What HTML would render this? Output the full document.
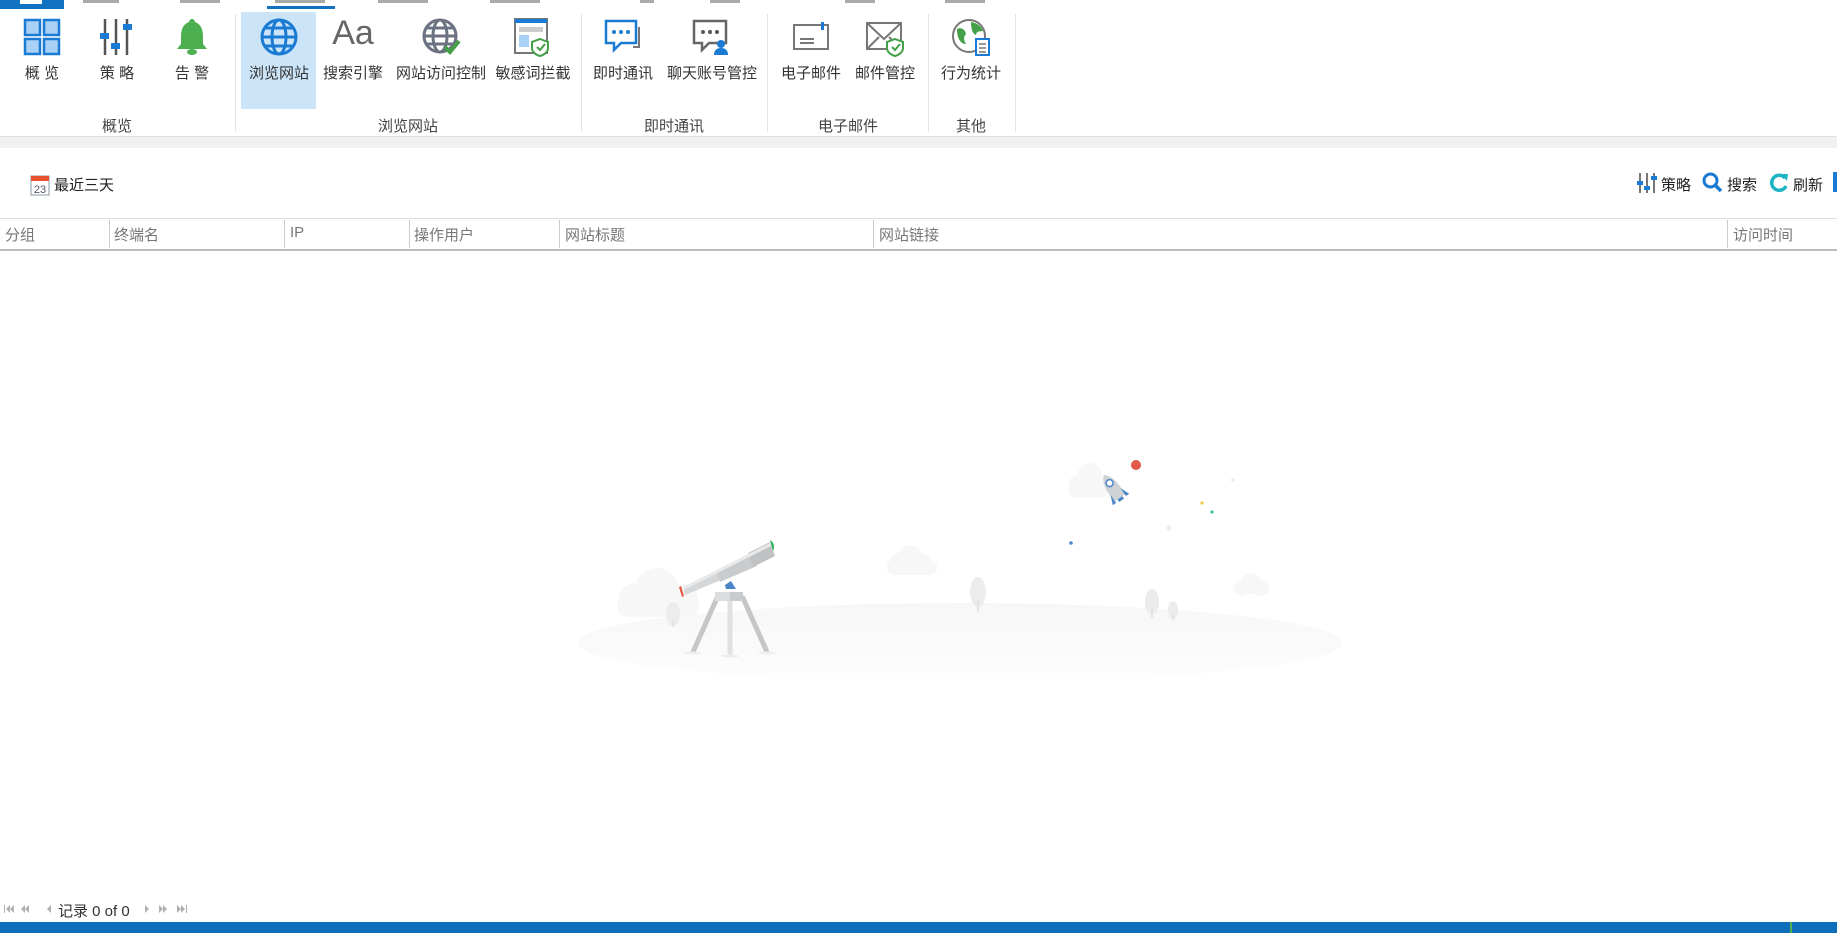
<!DOCTYPE html>
<html><head><meta charset="utf-8"><style>
*{margin:0;padding:0;box-sizing:border-box}
body{width:1837px;height:933px;overflow:hidden;background:#fff;font-family:"Liberation Sans","Noto Sans CJK SC",sans-serif;color:#333;position:relative}
.a{position:absolute}
.lbl{position:absolute;top:62px;font-size:15px;white-space:nowrap;transform:translateX(-50%);color:#333}
.grp{position:absolute;top:115px;font-size:15px;transform:translateX(-50%);color:#444}
.sep{position:absolute;top:14px;height:118px;width:1px;background:#e2e2e2}
.ico{position:absolute;top:17px;transform:translateX(-50%)}
.hd{position:absolute;top:224px;font-size:15px;color:#777}
.cs{position:absolute;top:220px;height:28px;width:1px;background:#ccc}
</style></head><body>
<div class="a" style="left:0;top:0;width:64px;height:9px;background:#1172c2"></div>
<div class="a" style="left:20px;top:0;width:22px;height:4px;background:#fff"></div>
<div class="a" style="left:267px;top:6px;width:68px;height:3px;background:#1172c2"></div>
<div class="a" style="left:83px;top:0;width:36px;height:3px;background:#555;opacity:.5"></div>
<div class="a" style="left:180px;top:0;width:40px;height:3px;background:#555;opacity:.5"></div>
<div class="a" style="left:275px;top:0;width:50px;height:3px;background:#555;opacity:.5"></div>
<div class="a" style="left:378px;top:0;width:50px;height:3px;background:#555;opacity:.5"></div>
<div class="a" style="left:490px;top:0;width:50px;height:3px;background:#555;opacity:.5"></div>
<div class="a" style="left:640px;top:0;width:14px;height:3px;background:#555;opacity:.5"></div>
<div class="a" style="left:710px;top:0;width:30px;height:3px;background:#555;opacity:.5"></div>
<div class="a" style="left:845px;top:0;width:30px;height:3px;background:#555;opacity:.5"></div>
<div class="a" style="left:945px;top:0;width:40px;height:3px;background:#555;opacity:.5"></div>

<div class="a" style="left:241px;top:12px;width:75px;height:97px;background:#cce4f7"></div>

<svg class="ico" style="left:42px" width="40" height="40" viewBox="0 0 40 40"><g fill="#a9d1f5" stroke="#1a7bd4" stroke-width="2.5"><rect x="3" y="3" width="15" height="15"/><rect x="22" y="3" width="15" height="15"/><rect x="3" y="22" width="15" height="15"/><rect x="22" y="22" width="15" height="15"/></g></svg>
<svg class="ico" style="left:117px" width="40" height="40" viewBox="0 0 40 40"><g stroke="#555" stroke-width="2.5"><line x1="8" y1="2" x2="8" y2="38"/><line x1="19" y1="2" x2="19" y2="38"/><line x1="30" y1="2" x2="30" y2="38"/></g><rect x="3" y="16" width="9" height="6" fill="#1a7bd4"/><rect x="14" y="26" width="9" height="6" fill="#1a7bd4"/><rect x="26" y="7" width="9" height="6" fill="#1a7bd4"/></svg>
<svg class="ico" style="left:192px" width="40" height="40" viewBox="0 0 40 40"><path d="M20 2c-2 0-3 2-3 3-6 2-8 8-8 14v8l-4 5h30l-4-5v-8c0-6-2-12-8-14 0-1-1-3-3-3z" fill="#4caf50"/><ellipse cx="20" cy="35" rx="5" ry="3" fill="#4caf50"/></svg>
<svg class="ico" style="left:279px" width="40" height="40" viewBox="0 0 40 40"><g fill="none" stroke="#1a7bd4" stroke-width="3"><circle cx="20" cy="20" r="17"/><ellipse cx="20" cy="20" rx="7" ry="17"/><line x1="3" y1="20" x2="37" y2="20"/><line x1="6" y1="11" x2="34" y2="11"/><line x1="6" y1="29" x2="34" y2="29"/></g></svg>
<div class="ico" style="left:353px;top:14px;font-size:34px;color:#666;font-family:'Liberation Sans',sans-serif">Aa</div>
<svg class="ico" style="left:441px" width="40" height="40" viewBox="0 0 40 40"><g fill="none" stroke="#6b7280" stroke-width="3"><circle cx="19" cy="19" r="16"/><ellipse cx="19" cy="19" rx="7" ry="16"/><line x1="3" y1="19" x2="35" y2="19"/><line x1="5" y1="11" x2="33" y2="11"/><line x1="5" y1="27" x2="33" y2="27"/></g><path d="M24 30l5 5 9-11" stroke="#43a047" stroke-width="4" fill="none"/></svg>
<svg class="ico" style="left:532px" width="40" height="40" viewBox="0 0 40 40"><rect x="3" y="2" width="32" height="34" fill="#fff" stroke="#777" stroke-width="2"/><rect x="3" y="2" width="32" height="4" fill="#1a7bd4"/><rect x="7" y="10" width="24" height="5" fill="#ccc"/><rect x="7" y="18" width="10" height="12" fill="#a9d1f5"/><path d="M28 22l8 3v6c0 4-4 7-8 8-4-1-8-4-8-8v-6z" fill="#fff" stroke="#43a047" stroke-width="2"/><path d="M25 30l3 3 5-6" stroke="#43a047" stroke-width="2" fill="none"/></svg>
<svg class="ico" style="left:623px" width="40" height="40" viewBox="0 0 40 40"><path d="M3 4h30v22H18l-7 7v-7H3z" fill="#fff" stroke="#1a7bd4" stroke-width="2.5"/><path d="M36 10v20h-6" stroke="#777" stroke-width="2" fill="none"/><circle cx="11" cy="15" r="2" fill="#1a7bd4"/><circle cx="18" cy="15" r="2" fill="#1a7bd4"/><circle cx="25" cy="15" r="2" fill="#1a7bd4"/></svg>
<svg class="ico" style="left:711px" width="40" height="40" viewBox="0 0 40 40"><path d="M3 4h32v22H18l-7 7v-7H3z" fill="#fff" stroke="#666" stroke-width="2.5"/><circle cx="12" cy="15" r="2" fill="#555"/><circle cx="19" cy="15" r="2" fill="#555"/><circle cx="26" cy="15" r="2" fill="#555"/><circle cx="30" cy="27" r="4" fill="#1a7bd4"/><path d="M23 38c0-5 3-7 7-7s7 2 7 7z" fill="#1a7bd4"/></svg>
<svg class="ico" style="left:811px" width="40" height="40" viewBox="0 0 40 40"><rect x="3" y="8" width="34" height="24" fill="#fff" stroke="#777" stroke-width="2"/><rect x="30" y="5" width="3" height="8" fill="#1a7bd4"/><line x1="9" y1="22" x2="23" y2="22" stroke="#777" stroke-width="2"/><line x1="9" y1="26" x2="23" y2="26" stroke="#777" stroke-width="2"/></svg>
<svg class="ico" style="left:885px" width="40" height="40" viewBox="0 0 40 40"><rect x="2" y="6" width="34" height="26" fill="#fff" stroke="#777" stroke-width="2"/><path d="M2 6l17 16 17-16M2 32l12-12M36 32l-12-12" stroke="#777" stroke-width="2" fill="none"/><path d="M30 22l8 3v6c0 4-4 7-8 8-4-1-8-4-8-8v-6z" fill="#fff" stroke="#43a047" stroke-width="2"/><path d="M27 30l3 3 5-6" stroke="#43a047" stroke-width="2" fill="none"/></svg>
<svg class="ico" style="left:971px" width="40" height="40" viewBox="0 0 40 40"><circle cx="18" cy="19" r="16" fill="#fff" stroke="#777" stroke-width="2"/><path d="M6 12c4-2 8 0 9 5-3 3-2 7 0 10-5 0-9-5-9-15z M20 5c6 1 10 4 12 9-3 1-6-1-7 4-3-1-5-5-5-13z" fill="#43a047"/><rect x="25" y="22" width="13" height="16" fill="#fff" stroke="#1a7bd4" stroke-width="2"/><g stroke="#777" stroke-width="1.5"><line x1="28" y1="27" x2="35" y2="27"/><line x1="28" y1="31" x2="35" y2="31"/><line x1="28" y1="35" x2="35" y2="35"/></g></svg>

<div class="lbl" style="left:42px">概 览</div>
<div class="lbl" style="left:117px">策 略</div>
<div class="lbl" style="left:192px">告 警</div>
<div class="lbl" style="left:279px">浏览网站</div>
<div class="lbl" style="left:353px">搜索引擎</div>
<div class="lbl" style="left:441px">网站访问控制</div>
<div class="lbl" style="left:533px">敏感词拦截</div>
<div class="lbl" style="left:623px">即时通讯</div>
<div class="lbl" style="left:712px">聊天账号管控</div>
<div class="lbl" style="left:811px">电子邮件</div>
<div class="lbl" style="left:885px">邮件管控</div>
<div class="lbl" style="left:971px">行为统计</div>

<div class="grp" style="left:117px">概览</div>
<div class="grp" style="left:408px">浏览网站</div>
<div class="grp" style="left:674px">即时通讯</div>
<div class="grp" style="left:848px">电子邮件</div>
<div class="grp" style="left:971px">其他</div>
<div class="sep" style="left:235px"></div>
<div class="sep" style="left:581px"></div>
<div class="sep" style="left:767px"></div>
<div class="sep" style="left:928px"></div>
<div class="sep" style="left:1015px"></div>

<div class="a" style="left:0;top:136px;width:1837px;height:12px;background:#f1f1f1;border-top:1px solid #e0e0e0"></div>

<svg class="a" style="left:30px;top:174px" width="20" height="22" viewBox="0 0 20 22"><rect x="1" y="2" width="18" height="19" fill="#fff" stroke="#8a98aa"/><rect x="1" y="2" width="18" height="5" fill="#e8532f"/><text x="10" y="19" font-size="11" text-anchor="middle" fill="#556" font-family="Liberation Sans">23</text></svg>
<div class="a" style="left:54px;top:174px;font-size:15px;color:#222">最近三天</div>
<svg class="a" style="left:1637px;top:172px" width="20" height="22" viewBox="0 0 20 22"><g stroke="#555" stroke-width="1.6"><line x1="3" y1="1" x2="3" y2="21"/><line x1="10" y1="1" x2="10" y2="21"/><line x1="17" y1="1" x2="17" y2="21"/></g><rect x="0" y="9" width="6" height="4" fill="#1a7bd4"/><rect x="7" y="14" width="6" height="4" fill="#1a7bd4"/><rect x="14" y="4" width="6" height="4" fill="#1a7bd4"/></svg>
<div class="a" style="left:1661px;top:174px;font-size:15px;color:#222">策略</div>
<svg class="a" style="left:1702px;top:172px" width="21" height="21" viewBox="0 0 21 21"><circle cx="8.5" cy="8.5" r="6.5" fill="none" stroke="#1a7bd4" stroke-width="3"/><line x1="13" y1="13" x2="19" y2="19" stroke="#1a7bd4" stroke-width="3.5"/></svg>
<div class="a" style="left:1727px;top:174px;font-size:15px;color:#222">搜索</div>
<svg class="a" style="left:1769px;top:172px" width="20" height="21" viewBox="0 0 20 21"><path d="M16 6A7.5 7.5 0 1 0 17 14" fill="none" stroke="#1bb5c4" stroke-width="3.5"/><path d="M12 2l7 0-1 7z" fill="#1bb5c4"/></svg>
<div class="a" style="left:1793px;top:174px;font-size:15px;color:#222">刷新</div>
<div class="a" style="left:1833px;top:172px;width:4px;height:20px;background:#1a7bd4"></div>

<div class="a" style="left:0;top:218px;width:1837px;height:1px;background:#ddd"></div>
<div class="a" style="left:0;top:249px;width:1837px;height:2px;background:#bbb"></div>
<div class="cs" style="left:109px"></div><div class="cs" style="left:284px"></div><div class="cs" style="left:409px"></div><div class="cs" style="left:559px"></div><div class="cs" style="left:873px"></div><div class="cs" style="left:1727px"></div>
<div class="hd" style="left:5px">分组</div>
<div class="hd" style="left:114px">终端名</div>
<div class="hd" style="left:290px">IP</div>
<div class="hd" style="left:414px">操作用户</div>
<div class="hd" style="left:565px">网站标题</div>
<div class="hd" style="left:879px">网站链接</div>
<div class="hd" style="left:1733px">访问时间</div>

<svg class="a" style="left:560px;top:440px" width="800" height="300" viewBox="560 440 800 300">
<defs><linearGradient id="g" x1="0" y1="0" x2="0" y2="1"><stop offset="0" stop-color="#f7f7f7"/><stop offset="0.7" stop-color="#fbfbfb"/><stop offset="1" stop-color="#fff"/></linearGradient></defs>
<g fill="#f7f7f7">
<circle cx="657" cy="590" r="22"/><circle cx="635" cy="600" r="17"/><circle cx="682" cy="600" r="16"/><rect x="617" y="595" width="82" height="22" rx="11"/>
<circle cx="910" cy="557" r="12"/><circle cx="899" cy="563" r="10"/><circle cx="922" cy="564" r="10"/><rect x="887" y="560" width="50" height="15" rx="7"/>
<circle cx="1251" cy="583" r="10"/><circle cx="1242" cy="588" r="8"/><circle cx="1260" cy="588" r="8"/><rect x="1233" y="584" width="37" height="10" rx="5"/>
<circle cx="1090" cy="475" r="12"/><circle cx="1078" cy="484" r="9"/><circle cx="1098" cy="485" r="10"/><rect x="1068" y="480" width="40" height="18" rx="9"/>
</g>
<ellipse cx="960" cy="643" rx="382" ry="40" fill="url(#g)"/>
<g fill="#ececec"><ellipse cx="673" cy="614" rx="7" ry="12"/><ellipse cx="978" cy="592" rx="8" ry="15"/><ellipse cx="1152" cy="602" rx="7" ry="13"/><ellipse cx="1173" cy="610" rx="5" ry="9"/></g>
<g stroke="#e4e4e4" stroke-width="2"><line x1="673" y1="620" x2="673" y2="627"/><line x1="978" y1="600" x2="978" y2="612"/><line x1="1152" y1="608" x2="1152" y2="618"/><line x1="1173" y1="614" x2="1173" y2="620"/></g>
<g stroke="#c4c6c8" stroke-width="5" stroke-linecap="round"><line x1="717" y1="598" x2="693" y2="652"/><line x1="743" y1="598" x2="767" y2="652"/></g>
<line x1="730" y1="597" x2="730" y2="655" stroke="#e0e1e2" stroke-width="5"/>
<g fill="#eee"><ellipse cx="693" cy="653" rx="9" ry="1.5"/><ellipse cx="767" cy="653" rx="9" ry="1.5"/><ellipse cx="730" cy="656" rx="9" ry="1.5"/></g>
<rect x="715" y="592" width="28" height="9" fill="#dcdddf"/>
<rect x="730" y="592" width="13" height="9" fill="#c9cbcd"/>
<path d="M725 585l6-4 5 8h-10z" fill="#4a86c8"/>
<path d="M683 587l35-16 3 9-36 15z" fill="#d4d6d8"/>
<path d="M716 571l36-18 5 13-37 16z" fill="#c9cbcd"/>
<path d="M748 553l22-11 5 14-22 11z" fill="#bfc1c3"/>
<path d="M683 587l87-44 1 3-87 44z" fill="#e8e9ea"/>
<path d="M681 586l3 10-2 1-3-10z" fill="#e05a47"/>
<path d="M770 540c4 2 5 7 3 11z" fill="#2bb35a"/>
<g transform="rotate(-35 1113 488)"><path d="M1113 472c6 5 8 15 6 28h-12c-2-13 0-23 6-28z" fill="#d0d3d6"/><circle cx="1113" cy="482" r="3.5" fill="#fff" stroke="#4a86c8" stroke-width="1.5"/><path d="M1107 492l-4 10 4 0z M1119 492l4 10-4 0z" fill="#4a86c8"/><rect x="1110" y="500" width="6" height="3" fill="#4a86c8"/></g>
<circle cx="1136" cy="465" r="5" fill="#e05a47"/>
<circle cx="1233" cy="480" r="2" fill="#eee"/><circle cx="1202" cy="503" r="1.6" fill="#f6c944"/><circle cx="1212" cy="512" r="1.6" fill="#41c38b"/><circle cx="1169" cy="528" r="2.6" fill="#eee"/><circle cx="1071" cy="543" r="1.8" fill="#4a86c8"/>
</svg>

<svg class="a" style="left:4px;top:904px" width="50" height="10" viewBox="0 0 50 10" fill="#b0b0b0"><rect x="0" y="1" width="1" height="8"/><path d="M6 1v8l-4-4z M10 1v8l-4-4z"/><path d="M21 1v8l-4-4z M25 1v8l-4-4z"/><path d="M47 1v8l-4-4z"/></svg>
<div class="a" style="left:58px;top:900px;font-size:15px;color:#333">记录 0 of 0</div>
<svg class="a" style="left:142px;top:904px" width="50" height="10" viewBox="0 0 50 10" fill="#b0b0b0"><path d="M3 1v8l4-4z"/><path d="M17 1v8l4-4z M21 1v8l4-4z"/><path d="M35 1v8l4-4z M39 1v8l4-4z"/><rect x="44" y="1" width="1" height="8"/></svg>

<div class="a" style="left:0;top:922px;width:1837px;height:11px;background:#0f6ebc"></div>
<div class="a" style="left:1790px;top:922px;width:2px;height:11px;background:#4caf50"></div>
</body></html>
